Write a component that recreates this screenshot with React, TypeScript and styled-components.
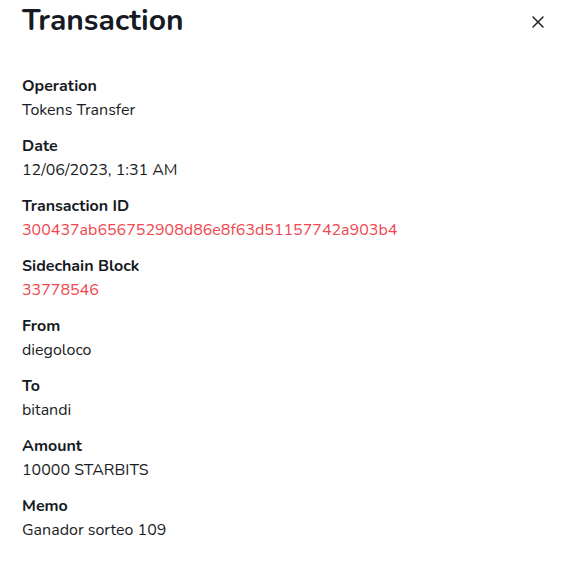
import React from "react";
import styled, { createGlobalStyle } from "styled-components";

const Global = createGlobalStyle`
  html, body { margin: 0; padding: 0; background: #ffffff; }
  body { font-family: "Nunito", "Lato", "Noto Sans", sans-serif; color: #1a1d24; }
`;

const Panel = styled.div`
  width: 569px;
  height: 576px;
  box-sizing: border-box;
  padding: 0 22px;
  display: flex;
  flex-direction: column;
`;

const Header = styled.div`
  display: flex;
  align-items: flex-start;
  justify-content: space-between;
  height: 47px;
  padding-top: 1px;
`;

const Title = styled.h2`
  margin: 0;
  font-size: 30px;
  line-height: 40px;
  font-weight: 700;
  color: #161a23;
`;

const Close = styled.button`
  border: 0;
  background: transparent;
  padding: 0;
  margin: 15px 3px 0 0;
  width: 12px;
  height: 12px;
  display: flex;
  color: #222;
  cursor: pointer;
`;

const List = styled.dl`
  margin: 26px 0 0;
  display: flex;
  flex-direction: column;
  gap: 12px;
`;

const Item = styled.div`
  display: flex;
  flex-direction: column;
`;

const Label = styled.dt`
  font-size: 16px;
  line-height: 24px;
  font-weight: 700;
  color: #161a23;
`;

const Value = styled.dd<{ $link?: boolean }>`
  margin: 0;
  font-size: 16px;
  line-height: 24px;
  color: ${(p) => (p.$link ? "#f0474f" : "#1a1d24")};
`;

const rows: { label: string; value: string; link?: boolean }[] = [
  { label: "Operation", value: "Tokens Transfer" },
  { label: "Date", value: "12/06/2023, 1:31 AM" },
  { label: "Transaction ID", value: "300437ab656752908d86e8f63d51157742a903b4", link: true },
  { label: "Sidechain Block", value: "33778546", link: true },
  { label: "From", value: "diegoloco" },
  { label: "To", value: "bitandi" },
  { label: "Amount", value: "10000 STARBITS" },
  { label: "Memo", value: "Ganador sorteo 109" },
];

export default function App() {
  return (
    <>
      <Global />
      <Panel>
        <Header>
          <Title>Transaction</Title>
          <Close aria-label="Close">
            <svg width="12" height="12" viewBox="0 0 12 12" fill="none" stroke="currentColor" strokeWidth="1.5" strokeLinecap="round">
              <path d="M1 1 L11 11 M11 1 L1 11" />
            </svg>
          </Close>
        </Header>
        <List>
          {rows.map((r) => (
            <Item key={r.label}>
              <Label>{r.label}</Label>
              <Value $link={r.link}>{r.value}</Value>
            </Item>
          ))}
        </List>
      </Panel>
    </>
  );
}
